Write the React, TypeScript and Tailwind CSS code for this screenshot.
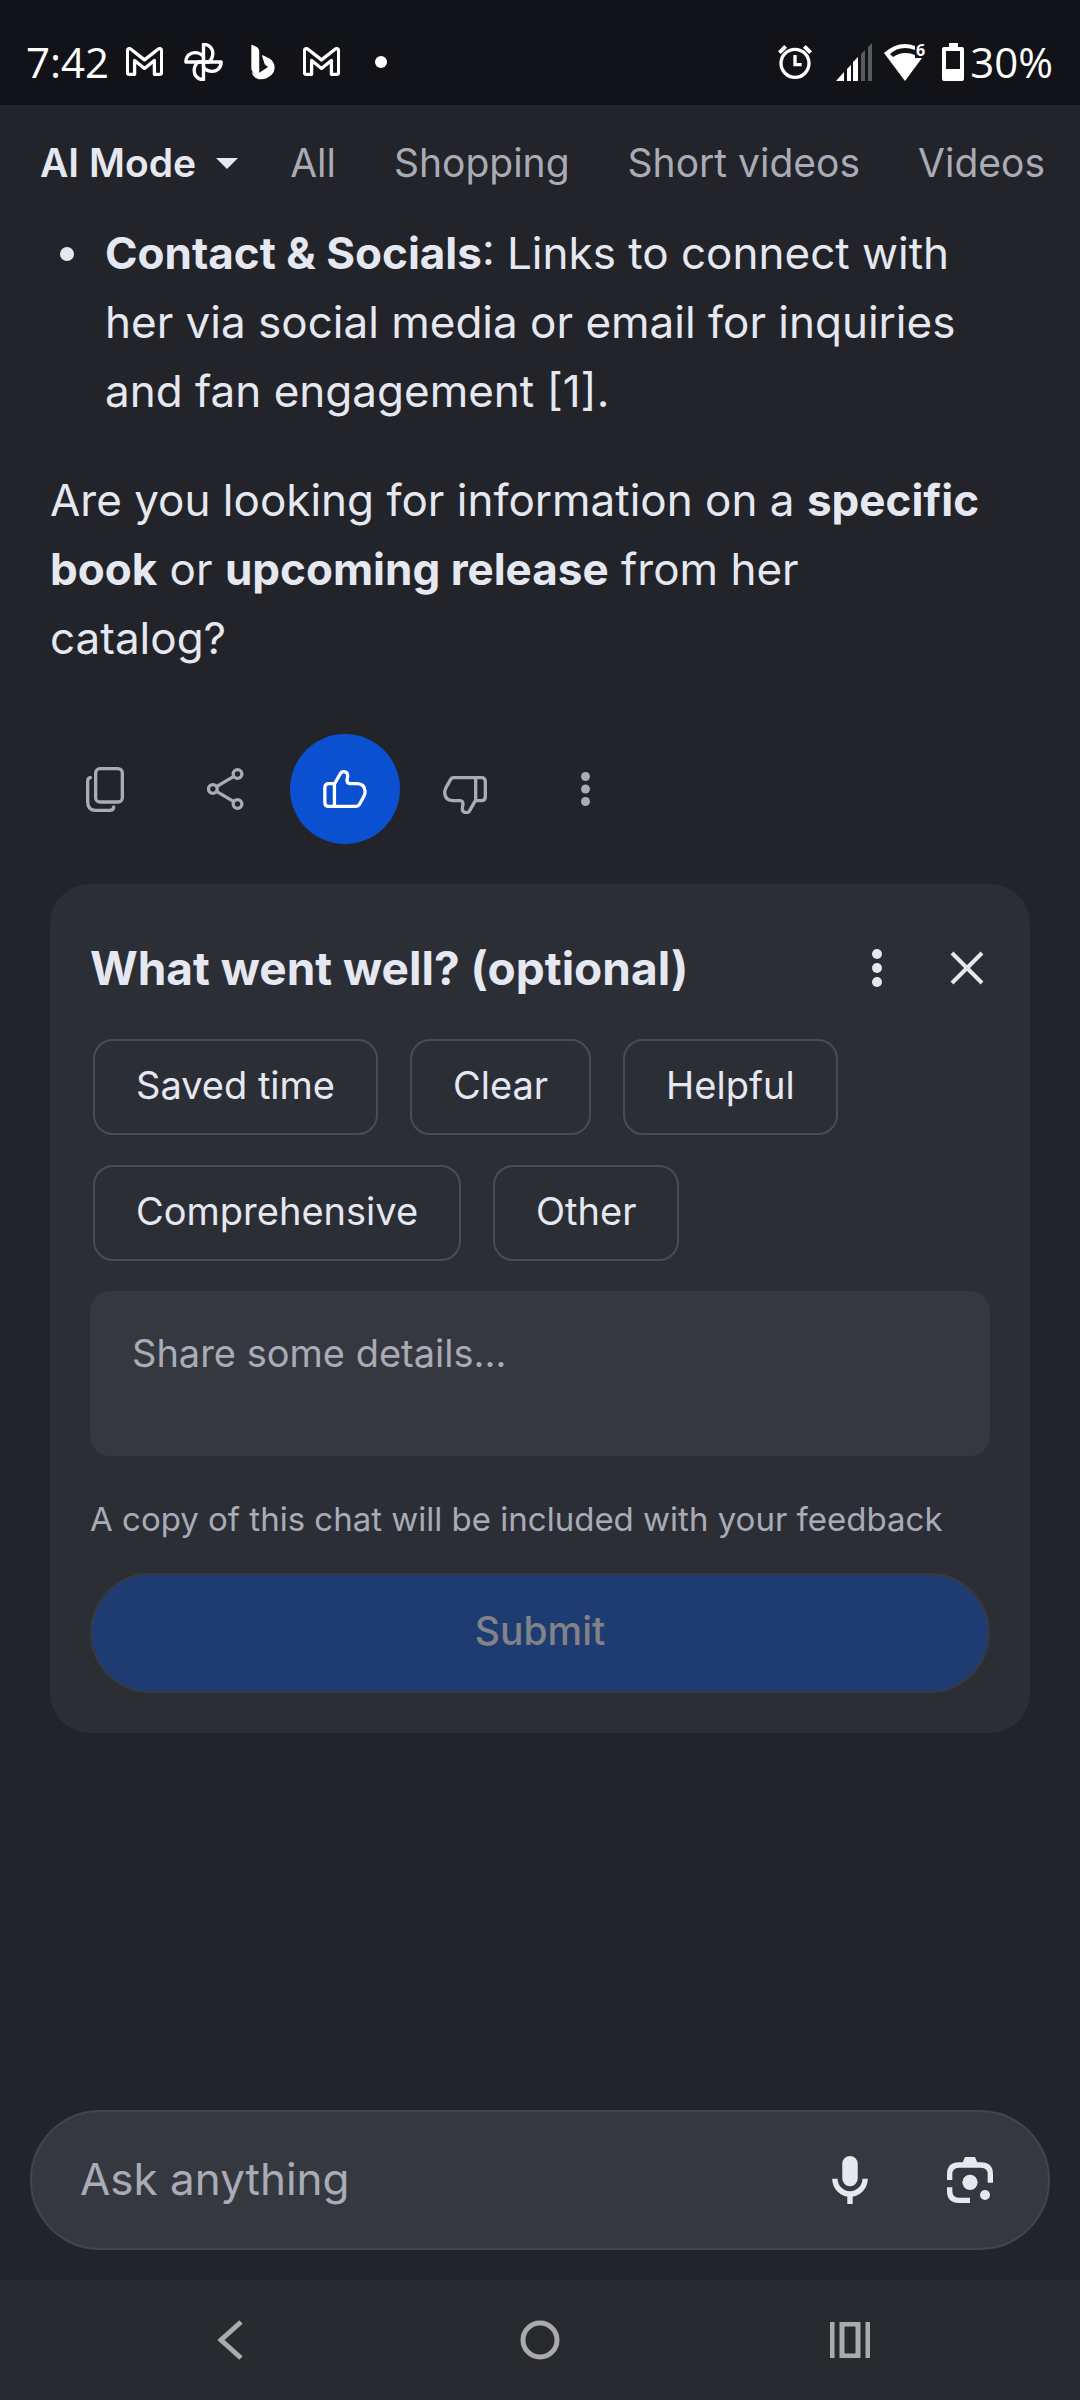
import { useState } from 'react';
import type { ReactNode } from 'react';

const tabs = ['All', 'Shopping', 'Short videos', 'Videos'];
const reasons = ['Saved time', 'Clear', 'Helpful', 'Comprehensive', 'Other'];

function GmailIcon() {
  return (
    <svg viewBox="47 36 112 88" className="h-[29px] w-[37px]" fill="none" stroke="currentColor" strokeWidth="10" strokeLinejoin="round">
      <path d="M51 113V48Q52 38 61 42L103 75L145 42Q154 38 155 48V113Q155 119 149 119H133V77L103 101L73 77V119H57Q51 119 51 113Z" />
    </svg>
  );
}

function PhotosIcon() {
  return (
    <svg viewBox="222 25 116 114" className="h-[38px] w-[39px]" fill="none" stroke="currentColor" strokeWidth="10" strokeLinejoin="round">
      <path d="M280 29C300 29 308 44 308 56C308 68 302 77 296 82H280Z" />
      <path d="M333 82C333 102 318 110 306 110C294 110 285 104 280 98V82Z" />
      <path d="M280 135C260 135 252 120 252 108C252 96 258 87 264 82H280Z" />
      <path d="M227 82C227 62 242 54 254 54C266 54 275 60 280 66V82Z" />
    </svg>
  );
}

function BingIcon() {
  return (
    <svg viewBox="422 29 73 107" className="h-9 w-6" fill="currentColor">
      <path d="M423 32Q423 29 427 31L441 38Q447 42 447 50V118Q430 126 423 104Z" />
      <path d="M458 62L478 72Q494 82 494 100Q494 112 484 122Q470 135 452 135Q430 135 424 112Q432 122 446 116L474 98L464 90L456 66Q455 60 458 62Z" />
    </svg>
  );
}

function AlarmIcon() {
  return (
    <svg viewBox="24 46 102 106" className="h-9 w-[34px]" fill="none" stroke="currentColor" strokeWidth="10">
      <circle cx="75" cy="103" r="42" />
      <path d="M75 78V107H95" />
      <path d="M28 71L47 52M122 71L103 52" strokeWidth="12" />
    </svg>
  );
}

function SignalIcon() {
  return (
    <svg viewBox="0 0 36 38" className="h-[38px] w-9" fill="currentColor">
      <path d="M0 38L8 29V38ZM11 26L15 22V38H11ZM17 19L22 14V38H17Z" />
      <path d="M25 11L29 7V38H25ZM32 4L36 0V38H32Z" opacity="0.3" />
    </svg>
  );
}

function WifiIcon() {
  return (
    <svg viewBox="0 0 44 38" className="h-[38px] w-11 overflow-visible" fill="currentColor">
      <path d="M0 10Q10 1 21 1Q26 1 31 3V7Q26 5 21 5Q12 5 6 11L9 14Q15 10 21 10Q27 10 31 12V15H38L21 38Z" />
      <text x="32" y="13" fontSize="16" fontWeight="700">6</text>
    </svg>
  );
}

function BatteryIcon() {
  return (
    <svg viewBox="0 0 22 38" className="h-[38px] w-[22px]" fill="currentColor" fillRule="evenodd">
      <path d="M7 0H16V4H20Q22 4 22 6V36Q22 38 20 38H2Q0 38 0 36V6Q0 4 2 4H7ZM4 8V26H18V8Z" />
    </svg>
  );
}

function StatusBar() {
  return (
    <div className="flex h-[105px] items-center bg-[#121318] pt-[18px] pr-[27px] pl-[26px] font-['Open_Sans',sans-serif] text-[42px] leading-[56px] text-white">
      <span>7:42</span>
      <div className="ml-[6px] grid auto-cols-[59px] grid-flow-col place-items-center">
        <GmailIcon />
        <PhotosIcon />
        <BingIcon />
        <GmailIcon />
        <span className="size-3 rounded-full bg-white" />
      </div>
      <div className="ml-auto flex items-center">
        <AlarmIcon />
        <span className="ml-6 flex items-center gap-3">
          <SignalIcon />
          <WifiIcon />
        </span>
        <span className="ml-[14px] flex items-center gap-[6px]">
          <BatteryIcon />
          <span>30%</span>
        </span>
      </div>
    </div>
  );
}

function ThumbPath() {
  return (
    <path d="M794 160H776Q764 160 764 172V217Q764 229 776 229H859Q865 229 868 224L882 199Q886 190 886 184Q885 161 862 160H840Q831 159 831 150L833 138Q834 126 823 124Q815 123 811 130L794 160ZM793 160V229" />
  );
}

function Dots({ className }: { className: string }) {
  return (
    <svg viewBox="0 0 10 38" className={className} fill="currentColor">
      <circle cx="5" cy="5" r="5" />
      <circle cx="5" cy="19" r="5" />
      <circle cx="5" cy="33" r="5" />
    </svg>
  );
}

function ActionButton({ label, active, children }: { label: string; active?: boolean; children: ReactNode }) {
  return (
    <button
      type="button"
      aria-label={label}
      className={
        active
          ? 'flex size-[110px] items-center justify-center rounded-full bg-[#0b50d0] text-white'
          : 'flex size-[110px] items-center justify-center rounded-full text-[#a9abb6]'
      }
    >
      {children}
    </button>
  );
}

function Actions() {
  return (
    <div className="mt-[61px] flex gap-[10px]">
      <ActionButton label="Copy">
        <svg viewBox="51 109 114 135" className="h-[45px] w-[38px]" fill="none" stroke="currentColor" strokeWidth="10" strokeLinecap="round">
          <rect x="80" y="114" width="80" height="100" rx="13" />
          <path d="M64 141Q56 142 56 152V213Q56 239 80 239H122Q134 239 134 229" />
        </svg>
      </ActionButton>
      <ActionButton label="Share">
        <svg viewBox="406 118 110 126" className="h-[42px] w-[37px]" fill="none" stroke="currentColor" strokeWidth="10">
          <circle cx="497" cy="136" r="13" />
          <circle cx="423" cy="181" r="13" />
          <circle cx="497" cy="226" r="13" />
          <path d="M434 174L486 143M434 188L486 219" />
        </svg>
      </ActionButton>
      <ActionButton label="Good response" active>
        <svg viewBox="759 119 132 115" className="h-[38px] w-11" fill="none" stroke="currentColor" strokeWidth="10" strokeLinejoin="round">
          <ThumbPath />
        </svg>
      </ActionButton>
      <ActionButton label="Bad response">
        <svg viewBox="759 87 132 147" className="h-[49px] w-11" fill="none" stroke="currentColor" strokeWidth="10" strokeLinejoin="round">
          <g transform="rotate(180 825 177)">
            <ThumbPath />
          </g>
        </svg>
      </ActionButton>
      <ActionButton label="More options">
        <Dots className="h-[34px] w-[9px]" />
      </ActionButton>
    </div>
  );
}

function FeedbackCard() {
  const [picked, setPicked] = useState<string[]>([]);

  const toggle = (r: string) =>
    setPicked((cur) => (cur.includes(r) ? cur.filter((x) => x !== r) : [...cur, r]));

  return (
    <form className="mt-10 rounded-[40px] bg-[#2c2e36] pt-14 pb-10" onSubmit={(e) => e.preventDefault()}>
      <div className="flex h-14 items-center pr-[18px] pl-10">
        <h2 className="flex-1 text-[46px] leading-[56px] font-bold">What went well? (optional)</h2>
        <button type="button" aria-label="More" className="flex w-[90px] justify-center">
          <Dots className="h-[38px] w-[10px]" />
        </button>
        <button type="button" aria-label="Close" className="flex w-[90px] justify-center">
          <svg viewBox="0 0 34 34" className="size-[34px]" stroke="currentColor" strokeWidth="4">
            <path d="M2 2L32 32M32 2L2 32" />
          </svg>
        </button>
      </div>
      <div className="px-10">
        <div className="mt-[43px] flex flex-wrap gap-x-8 gap-y-[30px] px-[3px]">
          {reasons.map((r) => (
            <button
              key={r}
              type="button"
              aria-pressed={picked.includes(r)}
              onClick={() => toggle(r)}
              className="h-24 rounded-[20px] border-2 border-[#4a4c54] px-[41px] pb-1 text-[38px] leading-[48px]"
            >
              {r}
            </button>
          ))}
        </div>
        <textarea
          aria-label="Share some details"
          placeholder="Share some details..."
          className="mt-[30px] block h-[165px] w-full resize-none rounded-[20px] bg-[#363840] px-[42px] py-[38px] text-[38px] leading-[48px] outline-none placeholder:text-[#a9abb6]"
        />
        <p className="mt-[41px] text-[33px] leading-[44px] text-[#a9abb6]">
          A copy of this chat will be included with your feedback
        </p>
        <button
          type="submit"
          disabled
          className="mt-8 h-[120px] w-full rounded-full border-2 border-[#38393e] bg-[#1f3c72] pb-1 text-[39px] font-medium text-[#828388]"
        >
          Submit
        </button>
      </div>
    </form>
  );
}

function AskBar() {
  return (
    <div className="mx-[30px] mt-auto mb-[30px] flex h-[140px] items-center rounded-full border-2 border-[#43454d] bg-[#363840] pr-[18px] pl-12">
      <input
        type="text"
        aria-label="Ask anything"
        placeholder="Ask anything"
        className="h-full min-w-0 flex-1 bg-transparent pb-[2px] text-[44px] outline-none placeholder:text-[#a9abb6]"
      />
      <button type="button" aria-label="Voice search" className="flex w-[120px] justify-center">
        <svg viewBox="277 225 106 143" className="h-12 w-9" fill="currentColor">
          <rect x="307" y="225" width="46" height="90" rx="23" />
          <path d="M285 293A45 45 0 0 0 375 293M330 338V368" fill="none" stroke="currentColor" strokeWidth="16" />
        </svg>
      </button>
      <button type="button" aria-label="Search with camera" className="flex w-[120px] justify-center">
        <svg viewBox="621 231 138 138" className="size-[46px]" fill="currentColor">
          <path
            d="M629 300V283Q629 255 657 255H723Q751 255 751 283V308M629 322V334Q629 361 657 361H690"
            fill="none"
            stroke="currentColor"
            strokeWidth="16"
          />
          <path d="M675 231H705L713 250H667Z" />
          <circle cx="690" cy="307" r="23" />
          <circle cx="735" cy="345" r="15" />
        </svg>
      </button>
    </div>
  );
}

function SystemNav() {
  return (
    <div className="grid h-[120px] grid-cols-3 place-items-center bg-[#292a2f] px-[75px] text-[#aaabad]">
      <button type="button" aria-label="Back">
        <svg viewBox="0 0 26 40" className="h-10 w-[26px]" fill="none" stroke="currentColor" strokeWidth="5">
          <path d="M24 2L4 20L24 38" />
        </svg>
      </button>
      <button type="button" aria-label="Home">
        <svg viewBox="0 0 40 40" className="size-10" fill="none" stroke="currentColor" strokeWidth="5">
          <circle cx="20" cy="20" r="17" />
        </svg>
      </button>
      <button type="button" aria-label="Recent apps">
        <svg viewBox="0 0 40 36" className="h-9 w-10" fill="none" stroke="currentColor" strokeWidth="5">
          <path d="M2 0V36M38 0V36M12 2H28V34H12Z" />
        </svg>
      </button>
    </div>
  );
}

export default function App() {
  return (
    <div className="flex min-h-screen flex-col bg-[#232429] font-['Inter',sans-serif] text-[#e5e8f0]">
      <StatusBar />
      <nav className="flex gap-[52px] overflow-hidden pt-[34px] pb-8 pl-10 text-[39px] leading-[48px] whitespace-nowrap text-[#a9abb6]">
        <button type="button" className="flex items-center gap-5 font-semibold text-[#e5e8f0]">
          AI Mode
          <svg viewBox="0 0 22 11" className="h-[11px] w-[22px]" fill="currentColor">
            <path d="M0 0H22L11 11Z" />
          </svg>
        </button>
        <div className="flex gap-[58px]">
          {tabs.map((t) => (
            <a key={t} href="#">
              {t}
            </a>
          ))}
        </div>
      </nav>
      <main className="px-[50px] pb-10">
        <div className="pr-[45px] text-[44px] leading-[69px]">
          <ul>
            <li className="flex">
              <span className="flex h-[69px] w-[55px] items-center pl-[10px]">
                <span className="size-[14px] rounded-full bg-[#e5e8f0]" />
              </span>
              <p className="flex-1">
                <strong className="font-bold">Contact &amp; Socials</strong>: Links to connect with her via social media or
                email for inquiries and fan engagement [1].
              </p>
            </li>
          </ul>
          <p className="mt-10">
            Are you looking for information on a <strong className="font-bold">specific book</strong> or{' '}
            <strong className="font-bold">upcoming release</strong> from her catalog?
          </p>
        </div>
        <Actions />
        <FeedbackCard />
      </main>
      <AskBar />
      <SystemNav />
    </div>
  );
}
